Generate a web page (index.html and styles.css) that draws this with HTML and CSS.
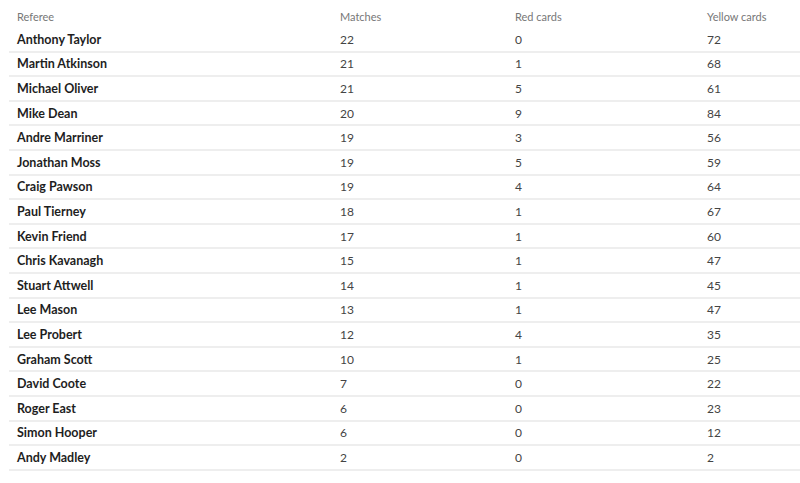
FILE: index.html
```html
<!DOCTYPE html>
<html>
<head>
<meta charset="utf-8">
<link rel="stylesheet" href="styles.css">
</head>
<body>
<table class="refs">
  <thead>
    <tr><th class="c-name">Referee</th><th class="c-m">Matches</th><th class="c-r">Red cards</th><th class="c-y">Yellow cards</th></tr>
  </thead>
  <tbody>
    <tr><td class="name">Anthony Taylor</td><td>22</td><td>0</td><td>72</td></tr>
    <tr><td class="name">Martin Atkinson</td><td>21</td><td>1</td><td>68</td></tr>
    <tr><td class="name">Michael Oliver</td><td>21</td><td>5</td><td>61</td></tr>
    <tr><td class="name">Mike Dean</td><td>20</td><td>9</td><td>84</td></tr>
    <tr><td class="name">Andre Marriner</td><td>19</td><td>3</td><td>56</td></tr>
    <tr><td class="name">Jonathan Moss</td><td>19</td><td>5</td><td>59</td></tr>
    <tr><td class="name">Craig Pawson</td><td>19</td><td>4</td><td>64</td></tr>
    <tr><td class="name">Paul Tierney</td><td>18</td><td>1</td><td>67</td></tr>
    <tr><td class="name">Kevin Friend</td><td>17</td><td>1</td><td>60</td></tr>
    <tr><td class="name">Chris Kavanagh</td><td>15</td><td>1</td><td>47</td></tr>
    <tr><td class="name">Stuart Attwell</td><td>14</td><td>1</td><td>45</td></tr>
    <tr><td class="name">Lee Mason</td><td>13</td><td>1</td><td>47</td></tr>
    <tr><td class="name">Lee Probert</td><td>12</td><td>4</td><td>35</td></tr>
    <tr><td class="name">Graham Scott</td><td>10</td><td>1</td><td>25</td></tr>
    <tr><td class="name">David Coote</td><td>7</td><td>0</td><td>22</td></tr>
    <tr><td class="name">Roger East</td><td>6</td><td>0</td><td>23</td></tr>
    <tr><td class="name">Simon Hooper</td><td>6</td><td>0</td><td>12</td></tr>
    <tr><td class="name">Andy Madley</td><td>2</td><td>0</td><td>2</td></tr>
  </tbody>
</table>
</body>
</html>
```
FILE: styles.css
```css
html, body {
  margin: 0;
  padding: 0;
  background: #ffffff;
}
body {
  padding: 5px 0 0 9px;
  font-family: Lato, "Noto Sans", sans-serif;
}
.refs {
  width: 791px;
  border-collapse: collapse;
  table-layout: fixed;
}
.refs th {
  text-align: left;
  font-weight: normal;
  font-size: 11px;
  color: #777777;
  padding: 0 8px;
  height: 23px;
}
.refs .c-name { width: 307px; }
.refs .c-m { width: 159px; }
.refs .c-r { width: 176px; }
.refs td {
  height: 22.6px;
  padding: 0 8px;
  font-size: 12px;
  color: #444444;
  border-bottom: 2px solid #eeeeee;
}
.refs td.name {
  font-weight: bold;
  font-size: 12.5px;
  color: #1e1e1e;
}
```
